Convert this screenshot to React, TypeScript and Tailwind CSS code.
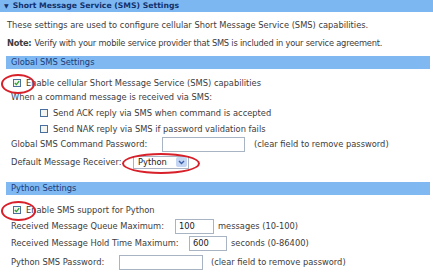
import React from 'react';

const font = { fontFamily: '"DejaVu Sans", Verdana, sans-serif' };

const Check: React.FC<{ checked?: boolean }> = ({ checked }) => (
  <span className="inline-flex h-[8px] w-[8px] shrink-0 items-center justify-center border border-[#4a6f9c] bg-[#f4f4f0]">
    {checked && (
      <svg width="6" height="6" viewBox="0 0 6 6">
        <path d="M0.8 3 L2.4 4.6 L5.2 1.2" fill="none" stroke="#27a22b" strokeWidth="1.3" />
      </svg>
    )}
  </span>
);

const Field: React.FC<{ w: string; value?: string }> = ({ w, value }) => (
  <span className={`flex h-[15px] ${w} shrink-0 items-center border border-[#a8b4c4] bg-white px-[3px] text-[#222]`}>{value}</span>
);

const SectionBar: React.FC<{ title: string }> = ({ title }) => (
  <div className="ml-[6px] mr-[3px] flex h-[13px] items-center bg-[#80b9f2] pl-[5px] text-[#1c3c78]">{title}</div>
);

const Ring: React.FC<{ cls: string }> = ({ cls }) => (
  <div className={`pointer-events-none absolute rounded-[50%] border-2 border-[#d8202a] ${cls}`} />
);

export default function App() {
  return (
    <div className="relative h-[274px] w-[433px] overflow-hidden bg-white text-[8.3px] leading-none text-[#3c3c3c]" style={font}>
      <div className="flex h-[12px] items-center bg-[#7db7f2] pl-[4px] text-[7.7px] font-bold text-[#12306a]">
        <span className="mr-[4px] text-[6px]">▼</span>
        <span>Short Message Service (SMS) Settings</span>
      </div>

      <div className="mt-[6px] flex h-[14px] items-center whitespace-nowrap pl-[7px]">
        These settings are used to configure cellular Short Message Service (SMS) capabilities.
      </div>
      <div className="mt-[4px] flex h-[14px] items-center whitespace-nowrap pl-[7px] tracking-[-0.22px]">
        <span className="mr-[3px] font-bold">Note:</span>
        Verify with your mobile service provider that SMS is included in your service agreement.
      </div>

      <div className="mt-[6px]">
        <SectionBar title="Global SMS Settings" />
      </div>

      <div className="mt-[7px] flex h-[14px] items-center gap-[5px] pl-[13px]">
        <Check checked />
        <span>Enable cellular Short Message Service (SMS) capabilities</span>
      </div>
      <div className="flex h-[14px] items-center pl-[11px]">When a command message is received via SMS:</div>
      <div className="mt-[2px] flex h-[14px] items-center gap-[5px] pl-[40px]">
        <Check />
        <span>Send ACK reply via SMS when command is accepted</span>
      </div>
      <div className="mt-[2px] flex h-[14px] items-center gap-[5px] pl-[40px]">
        <Check />
        <span>Send NAK reply via SMS if password validation fails</span>
      </div>
      <div className="flex h-[16px] items-center whitespace-nowrap pl-[11px]">
        <span className="w-[151px] shrink-0">Global SMS Command Password:</span>
        <Field w="w-[83px]" />
        <span className="ml-[9px]">(clear field to remove password)</span>
      </div>
      <div className="mt-[3px] flex h-[14px] items-center whitespace-nowrap pl-[11px]">
        <span className="w-[122px] shrink-0">Default Message Receiver:</span>
        <span className="flex h-[13px] w-[56px] items-center justify-between border border-[#a8b4c4] bg-white pl-[4px] text-[#222]">
          Python
          <span className="mr-[1px] flex h-[10px] w-[11px] items-center justify-center rounded-[2px] bg-[#c4d6f4]">
            <svg width="7" height="5" viewBox="0 0 7 5">
              <path d="M1 1 L3.5 3.5 L6 1" fill="none" stroke="#3a5ea8" strokeWidth="1.4" />
            </svg>
          </span>
        </span>
      </div>

      <div className="mt-[13px]">
        <SectionBar title="Python Settings" />
      </div>

      <div className="mt-[8px] flex h-[14px] items-center gap-[5px] pl-[13px]">
        <Check checked />
        <span>Enable SMS support for Python</span>
      </div>
      <div className="mt-[1px] flex h-[16px] items-center whitespace-nowrap pl-[11px]">
        <span className="w-[164px] shrink-0">Received Message Queue Maximum:</span>
        <Field w="w-[39px]" value="100" />
        <span className="ml-[4px]">messages (10-100)</span>
      </div>
      <div className="mt-[1px] flex h-[16px] items-center whitespace-nowrap pl-[11px]">
        <span className="w-[178px] shrink-0">Received Message Hold Time Maximum:</span>
        <Field w="w-[38px]" value="600" />
        <span className="ml-[4px]">seconds (0-86400)</span>
      </div>
      <div className="mt-[3px] flex h-[16px] items-center whitespace-nowrap pl-[11px]">
        <span className="w-[108px] shrink-0">Python SMS Password:</span>
        <Field w="w-[84px]" />
        <span className="ml-[8px]">(clear field to remove password)</span>
      </div>

      <Ring cls="left-[1px] top-[74px] h-[20px] w-[34px]" />
      <Ring cls="left-[122px] top-[153px] h-[21px] w-[78px]" />
      <Ring cls="left-[1px] top-[201px] h-[20px] w-[35px]" />
    </div>
  );
}
